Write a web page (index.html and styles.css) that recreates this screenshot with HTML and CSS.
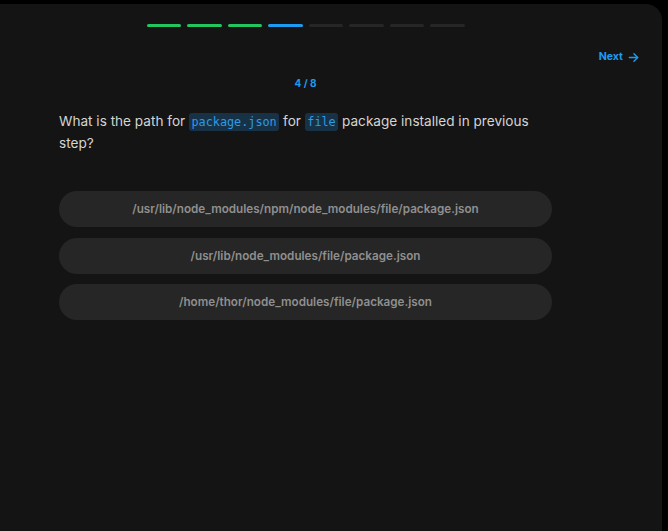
FILE: index.html
```html
<!DOCTYPE html>
<html>
<head>
<meta charset="utf-8">
<link rel="stylesheet" href="styles.css">
</head>
<body>
<div class="card">
  <main class="main">
    <div class="progress">
      <span class="seg done"></span>
      <span class="seg done"></span>
      <span class="seg done"></span>
      <span class="seg current"></span>
      <span class="seg"></span>
      <span class="seg"></span>
      <span class="seg"></span>
      <span class="seg"></span>
    </div>
    <div class="counter">4 / 8</div>
    <p class="question">What is the path for <code>package.json</code> for <code>file</code> package installed in previous step?</p>
    <div class="options">
      <button class="option">/usr/lib/node_modules/npm/node_modules/file/package.json</button>
      <button class="option">/usr/lib/node_modules/file/package.json</button>
      <button class="option">/home/thor/node_modules/file/package.json</button>
    </div>
  </main>
  <aside class="side">
    <a class="next">Next
      <svg width="11" height="11" viewBox="0 0 12 12" fill="none" stroke="currentColor" stroke-width="1.6" stroke-linecap="round" stroke-linejoin="round"><path d="M1.5 6h9"/><path d="M6.5 2l4 4-4 4"/></svg>
    </a>
  </aside>
</div>
</body>
</html>
```

FILE: styles.css
```css
html, body {
  margin: 0;
  padding: 0;
  background: #000;
  height: 100%;
  overflow: hidden;
}
body {
  font-family: Inter, "Noto Sans", sans-serif;
}
.card {
  margin-top: 4px;
  width: 662px;
  height: 540px;
  background: #141414;
  border-top-right-radius: 16px;
  display: flex;
}
.main {
  margin-left: 59px;
  width: 493px;
  padding-top: 20px;
  display: flex;
  flex-direction: column;
}
.progress {
  display: flex;
  justify-content: center;
  gap: 6px;
}
.seg {
  width: 34.5px;
  height: 3px;
  border-radius: 2px;
  background: #262626;
}
.seg.done { background: #22c55e; }
.seg.current { background: #1d9bf0; }
.counter {
  margin-top: 49px;
  text-align: center;
  color: #1d9bf0;
  font-size: 10px;
  font-weight: 700;
  line-height: 14px;
}
.question {
  margin: 20px 0 0;
  color: #d4d4d4;
  font-size: 13.6px;
  line-height: 22px;
}
.question code {
  display: inline-block;
  font-family: "DejaVu Sans Mono", "Liberation Mono", monospace;
  font-size: 11.8px;
  line-height: 18px;
  color: #2f9be3;
  background: #173247;
  padding: 0 2.5px;
  border-radius: 3px;
}
.options {
  margin-top: 37px;
  display: flex;
  flex-direction: column;
  gap: 10.5px;
}
.option {
  height: 36px;
  border: none;
  border-radius: 18px;
  background: #262626;
  color: #8f8f8f;
  font-family: Inter, "Noto Sans", sans-serif;
  font-size: 11.7px;
  font-weight: 600;
  text-align: center;
  padding: 0;
}
.side {
  flex: 1;
  display: flex;
  justify-content: flex-end;
  align-items: flex-start;
  padding-right: 23px;
  padding-top: 46px;
}
.next {
  display: flex;
  align-items: center;
  gap: 5px;
  color: #1d9bf0;
  font-size: 10.6px;
  font-weight: 700;
  line-height: 14px;
}
```
